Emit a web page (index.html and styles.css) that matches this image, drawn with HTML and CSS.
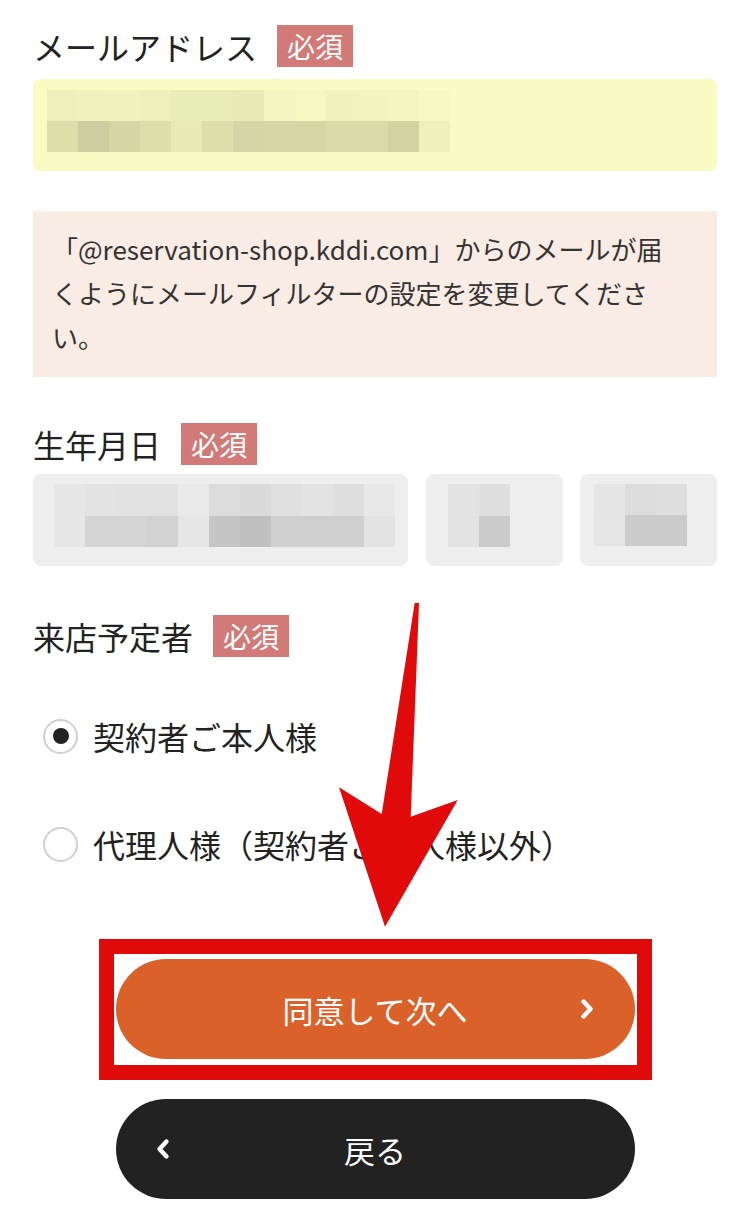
FILE: index.html
```html
<!DOCTYPE html>
<html lang="ja">
<head>
<meta charset="utf-8">
<title>入力フォーム</title>
<link rel="stylesheet" href="styles.css">
</head>
<body>
<div class="page">
  <div class="label-row">
    <span class="label">メールアドレス</span><span class="badge">必須</span>
  </div>
  <div class="field field-email">
    <div class="mosaic cols-13">
      <i style="background:#eef0bc"></i><i style="background:#f0f2be"></i><i style="background:#f1f3bf"></i><i style="background:#eef0bc"></i><i style="background:#e8ecb6"></i><i style="background:#e8ecb6"></i><i style="background:#e7eab4"></i><i style="background:#f3f6c0"></i><i style="background:#f6f8c2"></i><i style="background:#f1f3bd"></i><i style="background:#f2f4be"></i><i style="background:#f3f5bf"></i><i style="background:#f7f9c3"></i>
      <i style="background:#dcdfaa"></i><i style="background:#cdcda2"></i><i style="background:#d4d6a4"></i><i style="background:#dddfab"></i><i style="background:#e7eab5"></i><i style="background:#dcdfaa"></i><i style="background:#d4d7a5"></i><i style="background:#d5d8a5"></i><i style="background:#d5d8a5"></i><i style="background:#d8daa7"></i><i style="background:#d8dba7"></i><i style="background:#d1d4a1"></i><i style="background:#eef0ba"></i>
    </div>
  </div>

  <p class="notice">「@reservation-shop.kddi.com」からのメールが届くようにメールフィルターの設定を変更してください。</p>

  <div class="label-row label-birth">
    <span class="label">生年月日</span><span class="badge">必須</span>
  </div>
  <div class="birth-grid">
    <div class="field field-grey f-year">
      <div class="mosaic cols-11">
        <i style="background:#e6e6e6"></i><i style="background:#e3e3e3"></i><i style="background:#e2e2e2"></i><i style="background:#e2e2e2"></i><i style="background:#e9e9e9"></i><i style="background:#dcdcdc"></i><i style="background:#dadada"></i><i style="background:#e0e0e0"></i><i style="background:#e3e3e3"></i><i style="background:#dedede"></i><i style="background:#e8e8e8"></i>
        <i style="background:#e6e6e6"></i><i style="background:#d4d4d4"></i><i style="background:#d4d4d4"></i><i style="background:#d2d2d2"></i><i style="background:#e7e7e7"></i><i style="background:#c5c5c5"></i><i style="background:#c0c0c0"></i><i style="background:#cfcfcf"></i><i style="background:#cfcfcf"></i><i style="background:#cfcfcf"></i><i style="background:#e3e3e3"></i>
      </div>
    </div>
    <div class="field field-grey f-month">
      <div class="mosaic cols-2">
        <i style="background:#e3e3e3"></i><i style="background:#dfdfdf"></i>
        <i style="background:#e3e3e3"></i><i style="background:#cbcbcb"></i>
      </div>
    </div>
    <div class="field field-grey f-day">
      <div class="mosaic cols-3">
        <i style="background:#e5e5e5"></i><i style="background:#dcdcdc"></i><i style="background:#dedede"></i>
        <i style="background:#e6e6e6"></i><i style="background:#cbcbcb"></i><i style="background:#cbcbcb"></i>
      </div>
    </div>
  </div>

  <div class="label-row label-visitor">
    <span class="label">来店予定者</span><span class="badge">必須</span>
  </div>
  <div class="radio-list">
    <label class="radio-item">
      <span class="radio checked"></span>
      <span class="radio-text">契約者ご本人様</span>
    </label>
    <label class="radio-item">
      <span class="radio"></span>
      <span class="radio-text">代理人様（契約者ご本人様以外）</span>
    </label>
  </div>

  <div class="buttons">
    <button class="btn btn-next" type="button">
      <span>同意して次へ</span>
      <svg class="chev chev-right" viewBox="0 0 14 22" width="14" height="22" aria-hidden="true"><polyline points="3.5,3.5 10.5,11 3.5,18.5" fill="none" stroke="#fff" stroke-width="4.4" stroke-linecap="round" stroke-linejoin="round"/></svg>
    </button>
    <button class="btn btn-back" type="button">
      <svg class="chev chev-left" viewBox="0 0 14 22" width="14" height="22" aria-hidden="true"><polyline points="10.5,3.5 3.5,11 10.5,18.5" fill="none" stroke="#fff" stroke-width="4.4" stroke-linecap="round" stroke-linejoin="round"/></svg>
      <span>戻る</span>
    </button>
  </div>

  <div class="highlight-box"></div>
  <svg class="arrow" viewBox="0 0 140 340" width="140" height="340" aria-hidden="true">
    <polygon points="84.7,8 89,8 80.7,221.7 127.7,205 55,331.7 9,192.3 51.7,219" fill="#e00a0a"/>
  </svg>
</div>
</body>
</html>
```

FILE: styles.css
```css
* {
  box-sizing: border-box;
}

html, body {
  margin: 0;
  padding: 0;
  background: #ffffff;
}

body {
  font-family: "Noto Sans CJK JP", "Noto Sans", sans-serif;
  color: #222222;
}

.page {
  position: relative;
  width: 750px;
  padding: 25px 33px 22px;
}

.label-row {
  display: flex;
  align-items: center;
  height: 42px;
}

.label {
  font-size: 32px;
  line-height: 42px;
  color: #222222;
}

.badge {
  margin-left: 20px;
  height: 42px;
  padding: 0 10px;
  background: #d17a78;
  color: #ffffff;
  font-size: 28px;
  line-height: 42px;
}

.field {
  height: 92px;
  border-radius: 8px;
}

.field-email {
  margin-top: 12px;
  background: #f9fcc2;
  padding: 11px 14px;
}

.mosaic {
  display: grid;
  grid-auto-rows: 31px;
}

.mosaic i {
  display: block;
}

.cols-13 { grid-template-columns: repeat(13, 31px); }
.cols-11 { grid-template-columns: repeat(11, 31px); grid-auto-rows: 31.5px; }
.cols-3 { grid-template-columns: repeat(3, 31px); grid-auto-rows: 31px; }
.cols-2 { grid-template-columns: repeat(2, 31px); grid-auto-rows: 31.5px; }

.notice {
  margin: 40px 0 0;
  height: 166px;
  padding: 16px 45px 0 19px;
  background: #f9ece5;
  font-size: 26px;
  line-height: 44px;
  color: #333333;
  line-break: strict;
}

.label-birth {
  margin-top: 46px;
}

.birth-grid {
  margin-top: 9px;
  display: grid;
  grid-template-columns: 375fr 137fr 137fr;
  column-gap: 17.5px;
}

.field-grey {
  background: #eeeeee;
  padding-top: 10px;
}

.f-year { padding-left: 21px; }
.f-month { padding-left: 22px; }
.f-day { padding-left: 14px; }

.label-visitor {
  margin-top: 49px;
}

.radio-list {
  margin-top: 25px;
  display: flex;
  flex-direction: column;
}

.radio-item {
  display: flex;
  align-items: center;
  height: 108px;
}

.radio {
  flex: none;
  position: relative;
  width: 35px;
  height: 35px;
  margin-left: 10px;
  border: 2px solid #cfcfcf;
  border-radius: 50%;
  background: #ffffff;
}

.radio.checked::after {
  content: "";
  position: absolute;
  left: 50%;
  top: 50%;
  width: 16px;
  height: 16px;
  margin: -8px 0 0 -8px;
  border-radius: 50%;
  background: #222222;
}

.radio-text {
  margin-left: 15px;
  font-size: 32px;
  line-height: 42px;
  color: #222222;
}

.buttons {
  margin-top: 61px;
  display: flex;
  flex-direction: column;
  align-items: center;
  gap: 40px;
}

.btn {
  position: relative;
  display: flex;
  align-items: center;
  justify-content: center;
  width: 519px;
  height: 100px;
  border: none;
  border-radius: 50px;
  color: #ffffff;
  font-family: "Noto Sans CJK JP", "Noto Sans", sans-serif;
  font-size: 31px;
  padding: 0;
}

.btn-next {
  background: #db612a;
}

.btn-back {
  background: #222222;
}

.chev {
  position: absolute;
  top: 39px;
}

.chev-right {
  right: 41px;
}

.chev-left {
  left: 40px;
}

.highlight-box {
  position: absolute;
  left: 99px;
  top: 939px;
  width: 553px;
  height: 141px;
  border: 15px solid #e00a0a;
}

.arrow {
  position: absolute;
  left: 330px;
  top: 595px;
}
```
